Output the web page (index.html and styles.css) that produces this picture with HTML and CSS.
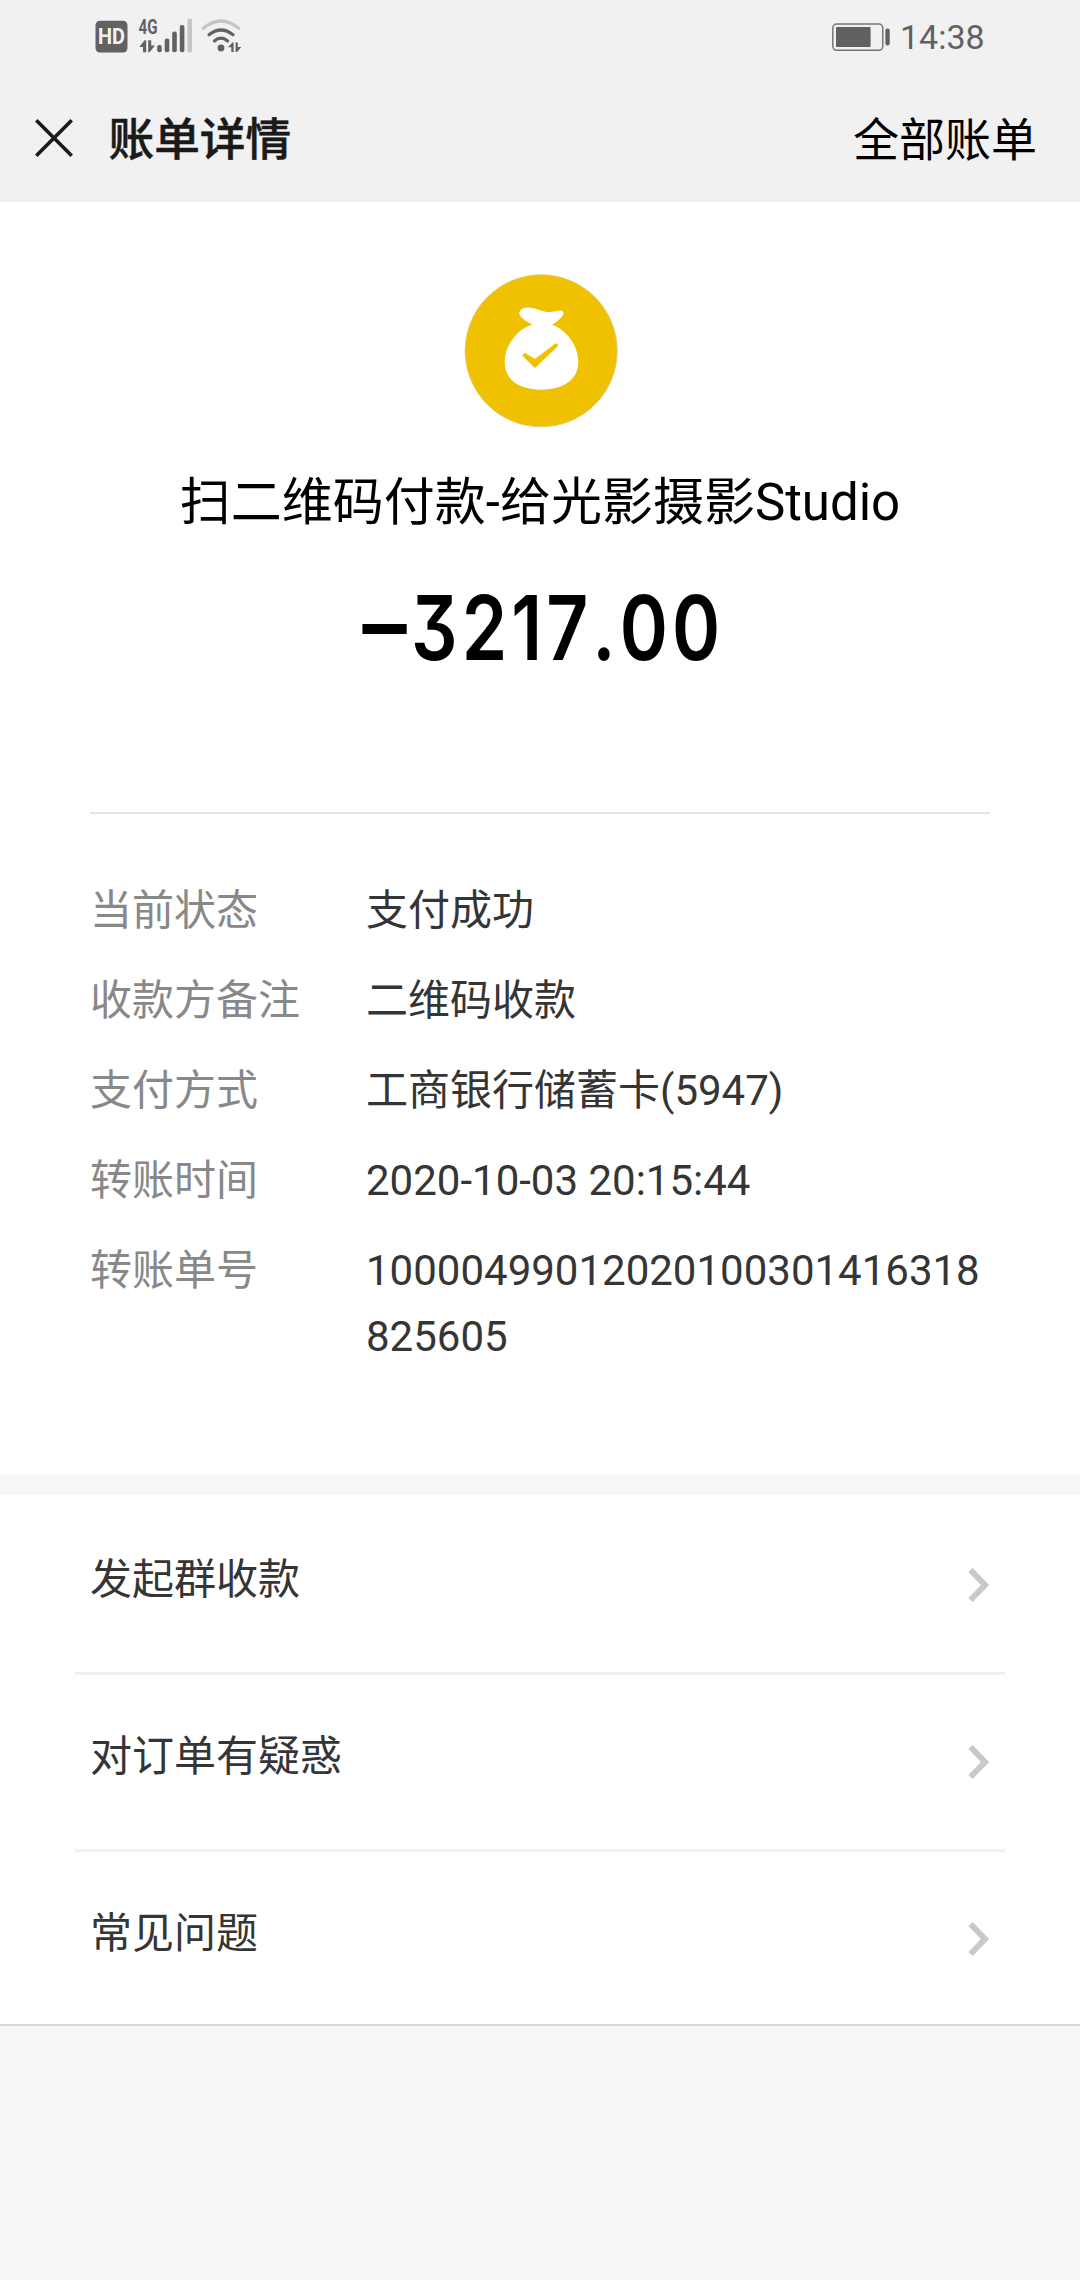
FILE: index.html
```html
<!DOCTYPE html>
<html lang="zh-CN">
<head>
<meta charset="utf-8">
<title>账单详情</title>
<link rel="stylesheet" href="styles.css">
</head>
<body>
<div class="page">
  <header class="top">
    <div class="status">
      <svg class="status-left" width="150" height="58" viewBox="94 8 150 58">
        <rect x="95.5" y="20.7" width="32" height="31.8" rx="4.5" fill="#616161"/>
        <text x="98" y="43.8" class="hd" textLength="27" lengthAdjust="spacingAndGlyphs">HD</text>
        <text x="138.6" y="33.8" class="net" textLength="19" lengthAdjust="spacingAndGlyphs">4G</text>
        <g fill="#616161">
          <path d="M139.3 47 L144.6 40.3 H146.2 V52.2 H143 V47 Z"/>
          <path d="M148.2 40.3 H151.2 V45.5 H155 L149.6 52.2 H148.2 Z"/>
          <rect x="157.2" y="45" width="4.6" height="7.3" rx="2"/>
          <rect x="164.7" y="38.4" width="4.6" height="13.9" rx="2"/>
          <rect x="172.2" y="31.6" width="4.6" height="20.7" rx="2"/>
          <rect x="179.8" y="25" width="4.6" height="27.3" rx="2"/>
          <rect x="187.4" y="18.8" width="4.6" height="33.5" rx="1.2" fill="#c6c6c6"/>
          <circle cx="221" cy="48" r="3.4"/>
          <path d="M228 47.3 L232.4 42.6 H233.6 V52 H231.3 V47.3 Z"/>
          <path d="M235.6 42.6 H237.8 V47 H241.3 L237 52 H235.6 Z"/>
        </g>
        <g fill="none" stroke-width="3.2" stroke-linecap="round">
          <path d="M203.2 28.4 Q221 13.6 238.8 28.4" stroke="#c6c6c6"/>
          <path d="M209 34.8 Q221 25.2 233 34.8" stroke="#616161"/>
          <path d="M214.4 41 Q221 35.4 227.6 41" stroke="#616161"/>
        </g>
      </svg>
      <div class="status-right">
        <svg width="60" height="30" viewBox="831 21.5 60 30">
          <rect x="832.8" y="23.5" width="50" height="26.3" rx="4" fill="none" stroke="#757575" stroke-width="1.5"/>
          <rect x="836" y="26.6" width="34.6" height="19.8" rx="1" fill="#616161"/>
          <rect x="885.4" y="28" width="4.3" height="17" rx="2" fill="#616161"/>
        </svg>
        <span class="clock">14:38</span>
      </div>
    </div>
    <nav class="nav">
      <svg class="close" width="38" height="38" viewBox="0 0 38 38"><path d="M1.3 1.3 L36.7 36.7 M36.7 1.3 L1.3 36.7" stroke="#1a1a1a" stroke-width="3.6"/></svg>
      <h1 class="nav-title">账单详情</h1>
      <a class="nav-link">全部账单</a>
    </nav>
  </header>

  <main class="bill">
    <svg class="bag" width="154" height="154" viewBox="43 40 462 462">
      <circle cx="274.5" cy="270.500" r="228" fill="#f0c100" stroke="#e2cd70" stroke-width="3"/>
      <path fill="#fff" d="M248 192 C233 184 209 171 209 158 C209 143 229 139 244 141 C265 144 278 154 299 154 C316 154 324 149 335 150 C344 152 342 162 336 169 C330 177 317 187 307 192 C349 206 386 254 386 305 C386 356 342 387 275 387 C208 387 165 356 165 305 C165 254 204 203 248 192 Z"/>
      <path fill="#f0c100" d="M219 286 C217 280 224 275 230 279 L256 295 L315 250 C322 245 328 252 323 258 L256 322 Z"/>
    </svg>
    <h2 class="payee">扫二维码付款-给光影摄影Studio</h2>
    <div class="amount"><span class="minus">–</span><span class="number">3217.00</span></div>
    <dl class="details">
      <dt>当前状态</dt><dd>支付成功</dd>
      <dt>收款方备注</dt><dd>二维码收款</dd>
      <dt>支付方式</dt><dd>工商银行储蓄卡(5947)</dd>
      <dt>转账时间</dt><dd>2020-10-03 20:15:44</dd>
      <dt>转账单号</dt><dd>10000499012020100301416318825605</dd>
    </dl>
  </main>

  <ul class="links">
    <li><span>发起群收款</span><svg width="22" height="36" viewBox="0 0 22 36"><path d="M2.500 3 L17 18 L2.500 33"/></svg></li>
    <li><span>对订单有疑惑</span><svg width="22" height="36" viewBox="0 0 22 36"><path d="M2.500 3 L17 18 L2.500 33"/></svg></li>
    <li><span>常见问题</span><svg width="22" height="36" viewBox="0 0 22 36"><path d="M2.500 3 L17 18 L2.500 33"/></svg></li>
  </ul>
</div>
</body>
</html>
```
FILE: styles.css
```css
* { box-sizing: border-box; margin: 0; padding: 0; }
body {
  background: #f7f7f7;
  font-family: Roboto, "Noto Sans CJK SC", sans-serif;
  color: #353535;
}
svg { display: block; flex: none; }
.page { width: 1080px; min-height: 2280px; }

.top { height: 202px; background: #f1f1f1; }
.status {
  height: 78px;
  padding: 8px 96px 0 94px;
  display: flex;
  justify-content: space-between;
  align-items: flex-start;
}
.status-right { display: flex; align-items: center; gap: 9px; height: 58px; }
.clock { font-size: 34px; line-height: 40px; color: #616161; width: 84px; }
.hd { font: 700 22px Roboto, sans-serif; fill: #f1f1f1; }
.net { font: 700 21px Roboto, sans-serif; fill: #616161; }

.nav { height: 124px; padding: 0 43px 0 35px; display: flex; align-items: center; }
.close { margin-top: -5px; }
.nav-title {
  margin-left: 35.5px;
  padding-top: 2px;
  font-size: 45.7px;
  line-height: 60px;
  font-weight: 500;
  color: #1a1a1a;
  -webkit-text-stroke: 0.5px #1a1a1a;
}
.nav-link { margin-left: auto; font-size: 46px; line-height: 60px; color: #000; }

.bill { height: 1272px; padding: 72px 90px 0; background: #fff; }
.bag { margin: 0 auto; position: relative; left: 1px; }
.payee {
  margin-top: 40px;
  font-size: 51px;
  line-height: 70px;
  font-weight: 400;
  text-align: center;
  color: #000;
  white-space: nowrap;
}
.amount {
  margin-top: 41px;
  padding-left: 265px;
  display: flex;
  height: 100px;
  line-height: 100px;
  color: #000;
}
.minus { width: 56px; padding-top: 1px; font-size: 91px; font-weight: 700; transform: scaleX(0.96); }
.number {
  margin-top: -1px;
  font-family: Inter, Roboto, sans-serif;
  font-size: 89px;
  font-weight: 600;
  font-kerning: none;
  font-feature-settings: "cv09" 1, "calt" 0;
  letter-spacing: 5px;
  transform: scaleX(0.82);
  transform-origin: left;
}
.details {
  margin-top: 133px;
  padding-top: 64px;
  border-top: 2px solid #e5e5e5;
  display: grid;
  grid-template-columns: 276px 1fr;
  row-gap: 24px;
  font-size: 42px;
  line-height: 66px;
}
.details dt { color: #888; }
.details dd { word-break: break-all; }

.links {
  margin-top: 21px;
  padding: 0 75px;
  background: #fff;
  border-bottom: 2px solid #d9d9d9;
  list-style: none;
}
.links li {
  height: 177px;
  padding: 52px 15px 0;
  display: flex;
  justify-content: space-between;
  align-items: flex-start;
  font-size: 42px;
  line-height: 66px;
}
.links li + li { height: 177px; border-top: 3px solid #f1f1f1; padding-top: 49px; }
.links li:last-child { height: 175px; }
.links svg { margin-top: 20px; fill: none; stroke: #c8c8cd; stroke-width: 6; }
```
